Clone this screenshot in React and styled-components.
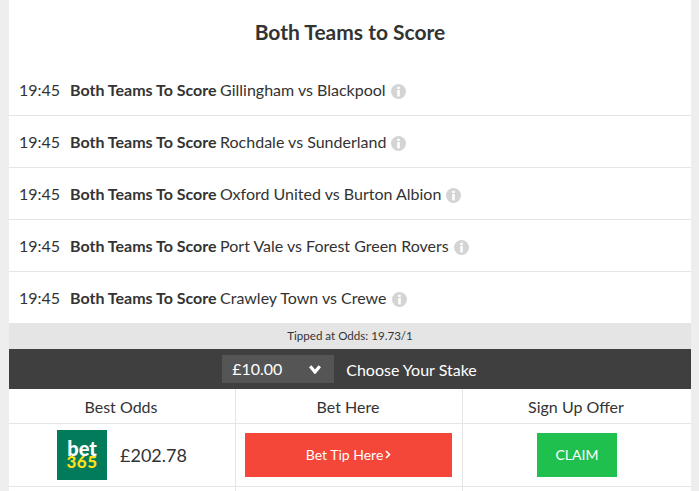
import React from "react";
import styled, { createGlobalStyle } from "styled-components";

const GlobalStyle = createGlobalStyle`
  html, body {
    margin: 0;
    padding: 0;
    height: 100%;
    overflow: hidden;
    background: #eeeeee;
    font-family: Lato, "Open Sans", sans-serif;
    color: #333333;
  }
  #root {
    height: 100%;
  }
`;

const Page = styled.div`
  width: 682px;
  height: 100%;
  margin-left: 9px;
  background: #fff;
`;

const Title = styled.h2`
  margin: 0;
  height: 64px;
  line-height: 64px;
  text-align: center;
  font-size: 21px;
  font-weight: 700;
`;

const TipList = styled.div`
  display: flex;
  flex-direction: column;
`;

const Tip = styled.div`
  display: flex;
  align-items: center;
  height: 51px;
  padding-left: 10px;
  font-size: 16px;
  border-bottom: 1px solid #e5e5e5;
  &:last-child {
    border-bottom: 0;
  }
`;

const Time = styled.span`
  width: 51px;
`;

const Market = styled.strong`
  font-weight: 700;
  margin-right: 3.5px;
`;

const Info = styled.span`
  display: inline-flex;
  align-items: center;
  margin-left: 5px;
  padding-top: 3px;
`;

const OddsNote = styled.div`
  height: 26px;
  line-height: 26px;
  text-align: center;
  font-size: 11.6px;
  background: #e5e5e5;
`;

const StakeBar = styled.div`
  display: flex;
  justify-content: center;
  align-items: center;
  gap: 12px;
  height: 40px;
  padding-right: 1px;
  background: #3f3f3f;
  color: #fff;
  font-size: 16px;
`;

const StakeSelect = styled.div`
  display: flex;
  align-items: center;
  justify-content: space-between;
  box-sizing: border-box;
  width: 112px;
  height: 28px;
  padding: 0 13px 2px 10px;
  background: #555555;
  svg {
    margin-top: 2px;
  }
`;

const OddsTable = styled.div`
  display: grid;
  grid-template-columns: 226px 227px 1fr;
`;

const HeadCell = styled.div`
  height: 34px;
  line-height: 35px;
  padding-right: 2px;
  text-align: center;
  font-size: 16px;
  border-bottom: 1px solid #e5e5e5;
  border-left: ${(props) => (props.$first ? "0" : "1px solid #e5e5e5")};
`;

const BodyCell = styled.div`
  display: flex;
  align-items: center;
  justify-content: center;
  height: ${(props) => (props.$spare ? "20px" : "62px")};
  border-bottom: ${(props) => (props.$spare ? "0" : "1px solid #e5e5e5")};
  border-left: ${(props) => (props.$first ? "0" : "1px solid #e5e5e5")};
`;

const Logo = styled.div`
  display: flex;
  flex-direction: column;
  align-items: center;
  justify-content: center;
  width: 50px;
  height: 50px;
  background: #027b5b;
  font-weight: 900;
  font-size: 20px;
  line-height: 14px;
  color: #fff;
`;

const LogoYellow = styled.span`
  color: #ffdf1b;
  font-size: 17px;
  letter-spacing: 0.5px;
`;

const Price = styled.span`
  margin-left: 13px;
  font-size: 18px;
`;

const Button = styled.a`
  display: flex;
  align-items: center;
  justify-content: center;
  box-sizing: border-box;
  gap: 2px;
  height: 44px;
  padding-bottom: 1px;
  margin-right: ${(props) => props.$nudge || 0}px;
  color: #fff;
  font-size: 14px;
  background: ${(props) => props.$bg};
  width: ${(props) => props.$w}px;
`;

const InfoIcon = () => (
  <svg width="15" height="15" viewBox="0 0 15 15">
    <circle cx="7.5" cy="7.5" r="7.5" fill="#d4d4d4" />
    <rect x="6.2" y="2.8" width="2.6" height="2.2" fill="#fff" />
    <rect x="6.2" y="6" width="2.6" height="6.4" fill="#fff" />
  </svg>
);

const Chevron = () => (
  <svg width="12" height="9" viewBox="0 0 12 9">
    <path d="M1.2 1.2 L6 7 L10.8 1.2" fill="none" stroke="#fff" strokeWidth="3.2" />
  </svg>
);

const ArrowRight = () => (
  <svg width="6" height="9" viewBox="0 0 6 9">
    <path d="M1 1 L4.5 4.5 L1 8" fill="none" stroke="#fff" strokeWidth="1.6" />
  </svg>
);

const tips = [
  "Gillingham vs Blackpool",
  "Rochdale vs Sunderland",
  "Oxford United vs Burton Albion",
  "Port Vale vs Forest Green Rovers",
  "Crawley Town vs Crewe",
];

export default function App() {
  return (
    <>
      <GlobalStyle />
      <Page>
        <Title>Both Teams to Score</Title>
        <TipList>
          {tips.map((match) => (
            <Tip key={match}>
              <Time>19:45</Time>
              <Market>Both Teams To Score</Market>
              {match}
              <Info>
                <InfoIcon />
              </Info>
            </Tip>
          ))}
        </TipList>
        <OddsNote>Tipped at Odds: 19.73/1</OddsNote>
        <StakeBar>
          <StakeSelect>
            £10.00
            <Chevron />
          </StakeSelect>
          Choose Your Stake
        </StakeBar>
        <OddsTable>
          <HeadCell $first>Best Odds</HeadCell>
          <HeadCell>Bet Here</HeadCell>
          <HeadCell>Sign Up Offer</HeadCell>
          <BodyCell $first>
            <Logo>
              bet
              <LogoYellow>365</LogoYellow>
            </Logo>
            <Price>£202.78</Price>
          </BodyCell>
          <BodyCell>
            <Button $bg="#f44739" $w={207} $nudge={1}>Bet Tip Here<ArrowRight /></Button>
          </BodyCell>
          <BodyCell>
            <Button $bg="#20c04f" $w={80}>CLAIM</Button>
          </BodyCell>
          <BodyCell $first $spare />
          <BodyCell $spare />
          <BodyCell $spare />
        </OddsTable>
      </Page>
    </>
  );
}
